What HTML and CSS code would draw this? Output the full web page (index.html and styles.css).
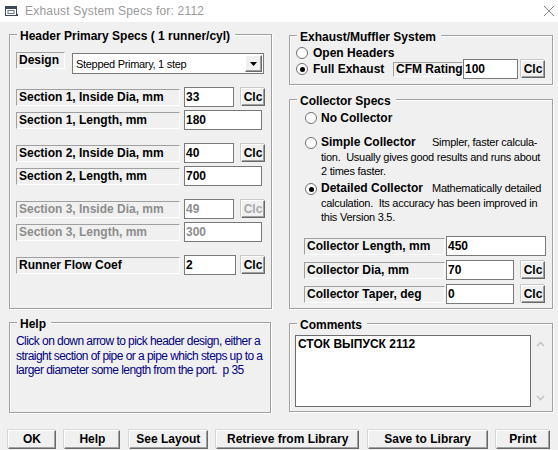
FILE: index.html
```html
<!DOCTYPE html>
<html>
<head>
<meta charset="utf-8">
<link rel="stylesheet" href="styles.css">
</head>
<body>
<div class="titlebar">
  <svg class="appicon" width="13" height="12" viewBox="0 0 13 12">
    <rect x="0.5" y="1.5" width="11" height="9" fill="#fff" stroke="#3c4a5a"/>
    <rect x="0.5" y="1.5" width="11" height="2.5" fill="#3c4a5a"/>
    <rect x="3" y="5.5" width="6" height="3" fill="none" stroke="#6a7a8a"/>
    <rect x="11" y="9" width="2" height="2" fill="#3c4a5a"/>
  </svg>
  <span class="title">Exhaust System Specs for: 2112</span>
  <svg class="close" width="12" height="12" viewBox="0 0 12 12">
    <path d="M1 1 L11 11 M11 1 L1 11" stroke="#8a8a8a" stroke-width="1" fill="none"/>
  </svg>
</div>

<div class="main">
  <div class="col col-left">
    <div class="group g-header">
      <div class="legend">Header Primary Specs ( 1 runner/cyl)</div>
      <div class="frow design-row">
        <div class="lbl lbl-design">Design</div>
        <div class="select">
          <span class="sel-text">Stepped Primary, 1 step</span>
          <span class="sel-btn"><svg width="7" height="4" viewBox="0 0 7 4"><path d="M0 0 H7 L3.5 4 Z" fill="#000"/></svg></span>
        </div>
      </div>
      <div class="frow gap-big">
        <div class="lbl">Section 1, Inside Dia, mm</div>
        <div class="inp inp-s">33</div>
        <div class="clc">Clc</div>
      </div>
      <div class="frow gap-small">
        <div class="lbl">Section 1, Length, mm</div>
        <div class="inp inp-l">180</div>
      </div>
      <div class="frow gap-big">
        <div class="lbl">Section 2, Inside Dia, mm</div>
        <div class="inp inp-s">40</div>
        <div class="clc">Clc</div>
      </div>
      <div class="frow gap-small">
        <div class="lbl">Section 2, Length, mm</div>
        <div class="inp inp-l">700</div>
      </div>
      <div class="frow gap-big disabled">
        <div class="lbl">Section 3, Inside Dia, mm</div>
        <div class="inp inp-s">49</div>
        <div class="clc">Clc</div>
      </div>
      <div class="frow gap-small disabled">
        <div class="lbl">Section 3, Length, mm</div>
        <div class="inp inp-l">300</div>
      </div>
      <div class="frow gap-big">
        <div class="lbl">Runner Flow Coef</div>
        <div class="inp inp-r">2</div>
        <div class="clc clc-r">Clc</div>
      </div>
    </div>

    <div class="group g-help">
      <div class="legend">Help</div>
      <p class="help-text">Click on down arrow to pick header design, either a<br>straight section of pipe or a pipe which steps up to a<br>larger diameter some length from the port.&nbsp; p 35</p>
    </div>
  </div>

  <div class="col col-right">
    <div class="group g-exhaust">
      <div class="legend">Exhaust/Muffler System</div>
      <div class="rrow">
        <span class="radio"></span><span class="rtext">Open Headers</span>
      </div>
      <div class="rrow rrow2">
        <div class="ritem"><span class="radio on"></span><span class="rtext">Full Exhaust</span></div>
        <div class="lbl lbl-cfm">CFM Rating</div>
        <div class="inp inp-cfm">100</div>
        <div class="clc clc-cfm">Clc</div>
      </div>
    </div>

    <div class="group g-collector">
      <div class="legend">Collector Specs</div>
      <div class="opt opt-none">
        <span class="radio"></span><span class="rtext">No Collector</span>
      </div>
      <div class="opt opt-multi">
        <span class="radio"></span>
        <p class="opt-body"><span class="otitle">Simple Collector</span>Simpler, faster calcula-<br>tion.&nbsp; Usually gives good results and runs about<br>2 times faster.</p>
      </div>
      <div class="opt opt-multi opt-detailed">
        <span class="radio on"></span>
        <p class="opt-body"><span class="otitle">Detailed Collector</span>Mathematically detailed<br>calculation.&nbsp; Its accuracy has been improved in<br>this Version 3.5.</p>
      </div>
      <div class="frow crow crow-first">
        <div class="lbl lbl-c">Collector Length, mm</div>
        <div class="inp inp-cl">450</div>
      </div>
      <div class="frow crow">
        <div class="lbl lbl-c">Collector Dia, mm</div>
        <div class="inp inp-cs">70</div>
        <div class="clc">Clc</div>
      </div>
      <div class="frow crow">
        <div class="lbl lbl-c">Collector Taper, deg</div>
        <div class="inp inp-cs">0</div>
        <div class="clc">Clc</div>
      </div>
    </div>

    <div class="group g-comments">
      <div class="legend">Comments</div>
      <div class="memo-row">
        <div class="memo">СТОК ВЫПУСК 2112</div>
        <div class="vscroll">
          <svg width="9" height="6" viewBox="0 0 9 6"><path d="M1 5 L4.5 1.5 L8 5" stroke="#c4c4c4" stroke-width="1.6" fill="none"/></svg>
          <svg width="9" height="6" viewBox="0 0 9 6"><path d="M1 1 L4.5 4.5 L8 1" stroke="#c4c4c4" stroke-width="1.6" fill="none"/></svg>
        </div>
      </div>
    </div>
  </div>
</div>

<div class="buttons">
  <div class="btn b-ok">OK</div>
  <div class="btn b-help">Help</div>
  <div class="btn b-layout">See Layout</div>
  <div class="btn b-retrieve">Retrieve from Library</div>
  <div class="btn b-save">Save to Library</div>
  <div class="btn b-print">Print</div>
</div>
</body>
</html>
```

FILE: styles.css
```css
* { box-sizing: border-box; }

html, body {
  margin: 0;
  padding: 0;
}

body {
  width: 558px;
  height: 450px;
  overflow: hidden;
  background: #f0f0f0;
  font-family: "Liberation Sans", Arial, sans-serif;
  font-size: 12px;
  color: #000;
}

/* ---------- title bar ---------- */
.titlebar {
  height: 22px;
  background: #fff;
  display: flex;
  align-items: center;
  padding-left: 5px;
}
.appicon { flex: none; }
.title {
  margin-left: 7px;
  color: #9a9a9a;
  font-size: 12px;
  letter-spacing: 0.2px;
}
.close {
  margin-left: auto;
  margin-right: 3px;
}

/* ---------- main area ---------- */
.main {
  display: flex;
  padding-left: 9px;
  gap: 17px;
}
.col {
  display: flex;
  flex-direction: column;
}
.col-left { width: 263px; padding-top: 12px; }
.col-right { width: 264px; padding-top: 13px; }

.group {
  border: 1px solid #a0a0a0;
  box-shadow: inset 1px 1px 0 #fff, 1px 1px 0 #fff;
  padding: 0 0 0 6px;
}
.legend {
  display: table;
  margin: -6px 0 0 1px;
  padding: 0 5px 0 3px;
  background: #f0f0f0;
  font-weight: bold;
  font-size: 12px;
  line-height: 14px;
}

.g-header { height: 275px; }
.g-help { height: 91px; width: 262px; margin-top: 13px; }
.g-exhaust { height: 50px; }
.g-collector { height: 210px; margin-top: 14px; }
.g-comments { height: 89px; margin-top: 14px; }

/* ---------- field rows ---------- */
.frow {
  display: flex;
  align-items: center;
  height: 20px;
}
.gap-big { margin-top: 13px; }
.gap-small { margin-top: 3px; }

.design-row {
  margin-top: 9px;
  height: 22px;
  align-items: flex-start;
}

.lbl {
  width: 164px;
  height: 17px;
  border: 1px solid;
  border-color: #a0a0a0 #fff #fff #a0a0a0;
  padding-left: 2px;
  font-weight: bold;
  font-size: 12px;
  line-height: 15px;
  white-space: nowrap;
}
.lbl-design { width: 49px; }

.select {
  margin-left: 7px;
  margin-top: 1px;
  width: 192px;
  height: 21px;
  background: #fff;
  border: 1px solid #7a7a7a;
  display: flex;
  align-items: center;
  padding-left: 3px;
}
.sel-text {
  font-size: 11px;
  letter-spacing: -0.3px;
  flex: 1;
}
.sel-btn {
  width: 17px;
  height: 17px;
  margin-right: 1px;
  background: #f0f0f0;
  border: 1px solid;
  border-color: #fff #696969 #696969 #fff;
  box-shadow: inset -1px -1px 0 #a0a0a0;
  display: flex;
  align-items: center;
  justify-content: center;
}

.inp {
  margin-left: 4px;
  height: 20px;
  background: #fff;
  border: 1px solid #7a7a7a;
  padding-left: 1px;
  font-weight: bold;
  font-size: 12px;
  line-height: 18px;
}
.inp-s { width: 50px; }
.inp-l { width: 78px; }
.inp-r { width: 52px; }

.clc {
  margin-left: 7px;
  width: 24px;
  height: 18px;
  background: #f0f0f0;
  border: 1px solid;
  border-color: #fff #696969 #696969 #fff;
  box-shadow: inset -1px -1px 0 #a0a0a0, -1px -1px 0 #c8c8c8;
  font-weight: bold;
  font-size: 12px;
  line-height: 16px;
  text-align: center;
}
.clc-r { margin-left: 5px; }

.disabled .lbl,
.disabled .inp,
.disabled .clc { color: #8d8d8d; }
.disabled .clc { color: #a8a8a8; }

/* ---------- help ---------- */
.help-text {
  margin: 3px 0 0 0;
  color: #000080;
  font-size: 12px;
  letter-spacing: -0.55px;
  line-height: 14.5px;
  white-space: nowrap;
}

/* ---------- radios ---------- */
.radio {
  flex: none;
  width: 12px;
  height: 12px;
  border-radius: 50%;
  border: 1px solid #707070;
  background: #fff;
  display: inline-flex;
  align-items: center;
  justify-content: center;
}
.radio.on::after {
  content: "";
  width: 5px;
  height: 5px;
  border-radius: 50%;
  background: #000;
}
.rtext {
  margin-left: 5px;
  font-weight: bold;
  font-size: 12px;
  white-space: nowrap;
}

.rrow {
  display: flex;
  align-items: center;
  height: 13px;
  margin-top: 2px;
}
.rrow2 { height: 20px; margin-top: 0; }
.ritem {
  width: 97px;
  display: flex;
  align-items: center;
}
.lbl-cfm {
  width: 70px;
  height: 15px;
  line-height: 13px;
}
.inp-cfm { width: 55px; margin-left: 0; }
.clc-cfm { margin-left: 3px; }

/* ---------- collector ---------- */
.opt {
  display: flex;
  margin-left: 9px;
}
.opt-none {
  margin-top: 2px;
  height: 16px;
  align-items: center;
}
.opt-none .rtext { margin-left: 4px; }
.opt-multi {
  height: 42px;
  margin-top: 10px;
}
.opt-detailed { margin-top: 4px; }
.opt-multi .radio { margin-top: 1px; }
.opt-body {
  margin: -1px 0 0 4px;
  font-size: 11px;
  letter-spacing: -0.25px;
  line-height: 14.5px;
  white-space: nowrap;
}
.otitle {
  display: inline-block;
  width: 111px;
  font-weight: bold;
  font-size: 12px;
  letter-spacing: 0;
}

.crow { margin-left: 8px; margin-top: 4px; }
.crow-first { margin-top: 12px; }
.lbl-c { width: 141px; }
.crow .inp { margin-left: 1px; }
.inp-cl { width: 100px; }
.inp-cs { width: 68px; }

/* ---------- comments ---------- */
.memo-row {
  display: flex;
  margin: 3px 0 0 -1px;
}
.memo {
  width: 236px;
  height: 72px;
  background: #fff;
  border: 1px solid #6d6d6d;
  padding: 1px 0 0 2px;
  font-weight: bold;
  font-size: 12px;
  line-height: 15px;
}
.vscroll {
  width: 17px;
  height: 72px;
  display: flex;
  flex-direction: column;
  align-items: center;
  justify-content: space-between;
  padding: 6px 0 6px 2px;
}

/* ---------- buttons ---------- */
.buttons {
  display: flex;
  justify-content: space-between;
  padding: 0 8px;
  margin-top: 17px;
}
.btn {
  height: 19px;
  background: #f0f0f0;
  border: 1px solid;
  border-color: #fff #696969 #696969 #fff;
  box-shadow: inset -1px -1px 0 #a0a0a0, -1px -1px 0 #d8d8d8;
  font-weight: bold;
  font-size: 12px;
  line-height: 17px;
  text-align: center;
}
.b-ok { width: 48px; }
.b-help { width: 56px; }
.b-layout { width: 79px; }
.b-retrieve { width: 143px; }
.b-save { width: 120px; }
.b-print { width: 54px; }
```
